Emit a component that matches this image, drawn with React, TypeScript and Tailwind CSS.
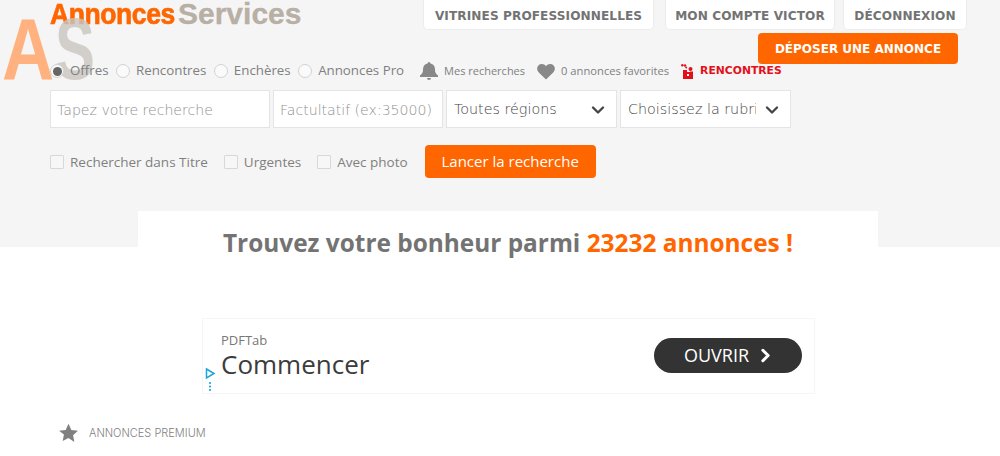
import React from 'react';
import { ChevronDown, ChevronRight } from 'lucide-react';

const sans = "font-['Open_Sans',sans-serif]";

const Radio = ({ label, checked }: { label: string; checked?: boolean }) => (
  <label className="flex items-center gap-[6px]">
    <span className="w-[14px] h-[14px] rounded-full border border-[#d2d2d2] bg-[#fafafa] flex items-center justify-center">
      {checked && <span className="w-[9px] h-[9px] rounded-full bg-[#666] blur-[0.6px]" />}
    </span>
    <span>{label}</span>
  </label>
);

const Check = ({ label }: { label: string }) => (
  <label className="flex items-center gap-[6px]">
    <span className="w-[14px] h-[14px] border border-[#d8d8d8] bg-[#f7f7f7] rounded-[1px]" />
    <span className="pt-[2px]">{label}</span>
  </label>
);

const NavButton = ({ children }: { children: React.ReactNode }) => (
  <a className="h-[36px] pt-[10px] flex items-center justify-center bg-white rounded-[5px] border border-[#ececec] border-t-0 font-['DejaVu_Sans',sans-serif] font-bold text-[12.100px] text-[#737373] tracking-[0.1px]">
    {children}
  </a>
);

const SelectBox = ({ label }: { label: string }) => (
  <div className="h-[38px] pt-[2px] bg-white border border-[#e4e4e4] flex items-center justify-between pl-[7px] pr-[8px] text-[#444] text-[14.300px] font-['DejaVu_Sans',sans-serif] font-light w-[171px]">
    <span className="whitespace-nowrap overflow-hidden w-[128px]">{label}</span>
    <ChevronDown size={20} strokeWidth={2.8} className="text-[#444] shrink-0" />
  </div>
);

export default function App() {
  return (
    <div className={`w-[1000px] h-[456px] overflow-hidden bg-white relative ${sans}`}>
      <header className="bg-[#f5f5f5] h-[247px] pl-[50px] relative flex flex-col">
        {/* logo */}
        <div className="absolute left-[50px] top-[-6px] flex font-['Liberation_Sans',sans-serif] font-bold text-[30px] leading-[40px] whitespace-nowrap">
          <div className="w-[128px]">
            <span className="inline-block origin-left scale-x-[0.885] text-[#ff6600] tracking-[-0.5px] [-webkit-text-stroke:0.7px_#ff6600]">Annonces</span>
          </div>
          <span className="inline-block text-[#b8afa5] [-webkit-text-stroke:0.3px_#b8afa5]">Services</span>
        </div>
        <div className="absolute left-[2px] top-[5px] font-['Liberation_Sans',sans-serif] font-bold text-[88px] leading-[88px] pointer-events-none flex">
          <span className="inline-block origin-left scale-x-[0.82] text-[#ffb27f] w-[53px]">A</span>
          <span className="inline-block origin-left scale-x-[0.68] text-[#c9c5c0]/80">S</span>
        </div>

        <div className="flex justify-end gap-[8px] mt-[-6px] pr-[33px] relative">
          <div className="w-[231px]"><NavButton>VITRINES PROFESSIONNELLES</NavButton></div>
          <div className="w-[170px] ml-[3px]"><NavButton>MON COMPTE VICTOR</NavButton></div>
          <div className="w-[124px]"><NavButton>DÉCONNEXION</NavButton></div>
        </div>
        <div className="flex justify-end pr-[42px] mt-[3px] relative">
          <a className="w-[200px] h-[31px] flex items-center justify-center bg-[#ff6600] rounded-[4px] text-white font-['DejaVu_Sans',sans-serif] font-bold text-[12px]">
            DÉPOSER UNE ANNONCE
          </a>
        </div>

        <div className="flex items-center h-[20px] mt-[-3px] text-[13.300px] text-[#808080] relative">
          <div className="flex gap-[7.500px]">
            <Radio label="Offres" checked />
            <Radio label="Rencontres" />
            <Radio label="Enchères" />
            <Radio label="Annonces Pro" />
          </div>
          <div className="flex items-center gap-[6px] ml-[16px] text-[11px]">
            <svg width="18" height="20" viewBox="0 0 18 20" fill="#888"><path d="M9 1a1.500 1.500 0 0 0-1.500 1.500C4.500 3 3 5.500 3 8.500c0 3-.8 4.500-3 6V16h18v-1.500c-2.200-1.500-3-3-3-6 0-3-1.500-5.500-4.500-6A1.500 1.500 0 0 0 9 1zM7 17a2 2 0 0 0 4 0z" /></svg>
            <span>Mes recherches</span>
          </div>
          <div className="flex items-center gap-[6px] ml-[12px] text-[11.200px]">
            <svg width="18" height="17" viewBox="0 0 18 17" fill="#888"><path d="M9 16.500 1.800 9.500C-1.500 6 .5 1 4.800 1 6.600 1 8 1.800 9 3.300 10 1.800 11.400 1 13.200 1c4.300 0 6.300 5 3 8.500z" /></svg>
            <span>0 annonces favorites</span>
          </div>
          <div className="flex items-center gap-[6px] ml-[12px] text-[10.800px] font-bold text-[#e3101a] font-['DejaVu_Sans',sans-serif]">
            <svg width="13" height="15" viewBox="0 0 13 15" fill="#e3101a">
              <circle cx="1.300" cy="1.300" r="1.200" />
              <circle cx="4" cy="1.500" r="1.200" />
              <circle cx="5.200" cy="3.600" r="1" />
              <circle cx="9.500" cy="5" r="2" />
              <path d="M2 6h4v2h3v-0.500h3V15H2z" />
              <path d="M6 10h2v2H6z" fill="#f5f5f5" />
            </svg>
            <span>RENCONTRES</span>
          </div>
        </div>

        <div className="flex gap-[3px] mt-[9px] relative">
          <input placeholder="Tapez votre recherche" className="w-[220px] h-[38px] pt-[2px] bg-white border border-[#e4e4e4] px-[6px] text-[14.100px] font-['DejaVu_Sans',sans-serif] font-light placeholder:text-[#909090] outline-none" />
          <input placeholder="Factultatif (ex:35000)" className="w-[170px] h-[38px] pt-[2px] bg-white border border-[#e4e4e4] px-[6px] text-[14.100px] font-['DejaVu_Sans',sans-serif] font-light placeholder:text-[#909090] outline-none" />
          <SelectBox label="Toutes régions" />
          <SelectBox label="Choisissez la rubri" />
        </div>

        <div className="flex items-center mt-[17px] gap-[16px] text-[13.500px] text-[#808080]">
          <Check label="Rechercher dans Titre" />
          <Check label="Urgentes" />
          <Check label="Avec photo" />
          <button className="w-[171px] h-[33px] bg-[#ff6600] text-white rounded-[4px] text-[15px] ml-[1px]">Lancer la recherche</button>
        </div>
      </header>

      <main className="w-[740px] ml-[138px] bg-white mt-[-36px] relative h-[60px] text-center">
        <h1 className="pt-[14px] text-[24.400px] leading-[36px] font-bold text-[#737373]">
          Trouvez votre bonheur parmi <span className="text-[#ff6600]">23232 annonces !</span>
        </h1>
      </main>

      <section className="w-[613px] h-[76px] ml-[202px] mt-[47px] pb-[2px] border border-[#f6f6f6] relative flex items-center justify-between pl-[18px] pr-[12px]">
        <div>
          <div className="text-[13px] leading-[18px] text-[#777]">PDFTab</div>
          <div className="text-[26px] leading-[30px] text-[#3c3c3c]">Commencer</div>
        </div>
        <button className="w-[148px] h-[35px] pl-[4px] rounded-full bg-[#333] text-white text-[18px] flex items-center justify-center gap-[6px]">
          OUVRIR <ChevronRight size={21} strokeWidth={3.500} />
        </button>
        <svg className="absolute left-[2px] top-[48px]" width="11" height="26" viewBox="0 0 11 26" fill="none">
          <path d="M1.500 2 9 6.500 1.500 11z" stroke="#1aa7d8" strokeWidth="1.500" />
          <circle cx="5" cy="16" r="1.100" fill="#1aa7d8" />
          <circle cx="5" cy="19.500" r="1.100" fill="#1aa7d8" />
          <circle cx="5" cy="23" r="1.100" fill="#1aa7d8" />
        </svg>
      </section>

      <div className="flex items-center gap-[10px] ml-[58px] mt-[29px]">
        <svg width="21" height="20" viewBox="0 0 24 24" fill="#808080"><path d="M12 1l3.400 7.300 7.900 1-5.800 5.500 1.500 7.900L12 18l-7 3.700 1.500-7.900L.7 9.300l7.900-1z" /></svg>
        <span className="text-[11px] text-[#808080] font-['Inter',sans-serif] font-light">ANNONCES PREMIUM</span>
      </div>
    </div>
  );
}
